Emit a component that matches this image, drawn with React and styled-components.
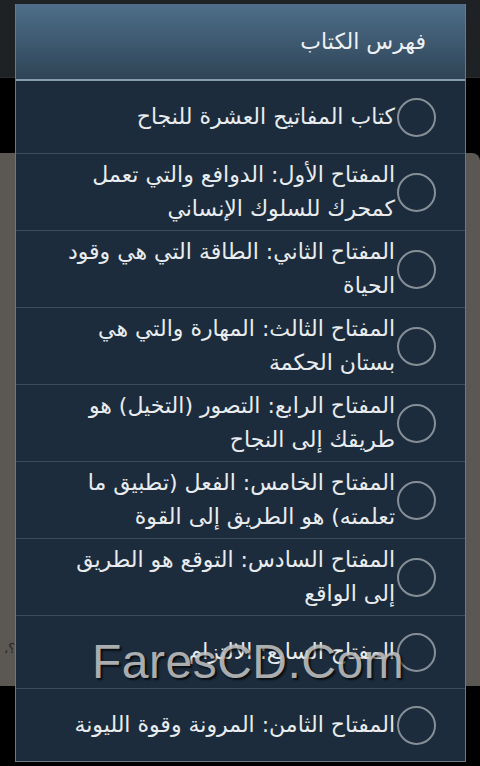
import React from 'react'
import styled, { createGlobalStyle } from 'styled-components'

const GlobalStyle = createGlobalStyle`
  html, body { margin: 0; padding: 0; background: #000; }
  body { width: 480px; height: 766px; overflow: hidden; }
`

const chapters = [
    ['كتاب المفاتيح العشرة للنجاح'],
    ['المفتاح الأول: الدوافع والتي تعمل', 'كمحرك للسلوك الإنساني'],
    ['المفتاح الثاني: الطاقة التي هي وقود', 'الحياة'],
    ['المفتاح الثالث: المهارة والتي هي', 'بستان الحكمة'],
    ['المفتاح الرابع: التصور (التخيل) هو', 'طريقك إلى النجاح'],
    ['المفتاح الخامس: الفعل (تطبيق ما', 'تعلمته) هو الطريق إلى القوة'],
    ['المفتاح السادس: التوقع هو الطريق', 'إلى الواقع'],
    ['المفتاح السابع: الالتزام'],
    ['المفتاح الثامن: المرونة وقوة الليونة'],
]

const App = () => {
    return (
        <Screen>
            <GlobalStyle />
            <ActionBar />
            <Band />
            <Page>
                <PageMark>،؟</PageMark>
            </Page>
            <Dialog dir="rtl">
                <Title>فهرس الكتاب</Title>
                <List>
                    {chapters.map((lines, i) => (
                        <Row key={i}>
                            <Radio />
                            <Label>
                                {lines.map((l, j) => <Line key={j}>{l}</Line>)}
                            </Label>
                        </Row>
                    ))}
                </List>
            </Dialog>
            <Watermark>FaresCD.Com</Watermark>
        </Screen>
    )
}

const Screen = styled.div`
  position: relative;
  width: 480px;
  height: 766px;
  background: #000;
  display: flex;
  flex-direction: column;
  font-family: "DejaVu Sans", "Noto Sans", sans-serif;
`
const ActionBar = styled.div`
  height: 77px;
  background: #1f2225;
  border-bottom: 1px solid #2a2d30;
`
const Band = styled.div`
  height: 75px;
  background: #000;
`
const Page = styled.div`
  height: 533px;
  background: #5b5853;
  border-top-right-radius: 8px;
  display: flex;
  flex-direction: column;
  justify-content: flex-end;
  padding: 0 0 30px 4px;
  box-sizing: border-box;
`
const PageMark = styled.div`
  font-size: 13px;
  color: #26241f;
`
const Dialog = styled.div`
  position: absolute;
  left: 15px;
  top: 4px;
  width: 451px;
  height: 758px;
  box-sizing: border-box;
  border: 1px solid #6c7882;
  border-top: none;
  background: #1c2c3c;
  display: flex;
  flex-direction: column;
  overflow: hidden;
`
const Title = styled.div`
  height: 75px;
  flex-shrink: 0;
  display: flex;
  align-items: center;
  padding-right: 39px;
  font-size: 22px;
  color: #eef1f4;
  background: linear-gradient(#4e6e8a, #2f4456);
  border-bottom: 2px solid #869db0;
`
const List = styled.div`
  display: flex;
  flex-direction: column;
`
const Row = styled.div`
  min-height: 73px;
  box-sizing: border-box;
  padding: 4px 29px 4px 10px;
  display: flex;
  align-items: center;
  gap: 2px;
  border-bottom: 1px solid #3a4c5d;
`
const Radio = styled.div`
  width: 35px;
  height: 35px;
  flex-shrink: 0;
  border-radius: 50%;
  border: 2px solid #868f97;
`
const Label = styled.div`
  display: flex;
  flex-direction: column;
`
const Line = styled.div`
  font-size: 22px;
  line-height: 34px;
  color: #e9ecef;
  white-space: nowrap;
`
const Watermark = styled.div`
  position: absolute;
  left: 92px;
  top: 634px;
  font-family: "Liberation Sans", Arial, sans-serif;
  font-size: 48px;
  letter-spacing: 0.5px;
  color: rgba(200, 200, 200, 0.85);
  text-shadow: 2px 2px 2px rgba(0, 0, 0, 0.7);
  pointer-events: none;
`

export default App
